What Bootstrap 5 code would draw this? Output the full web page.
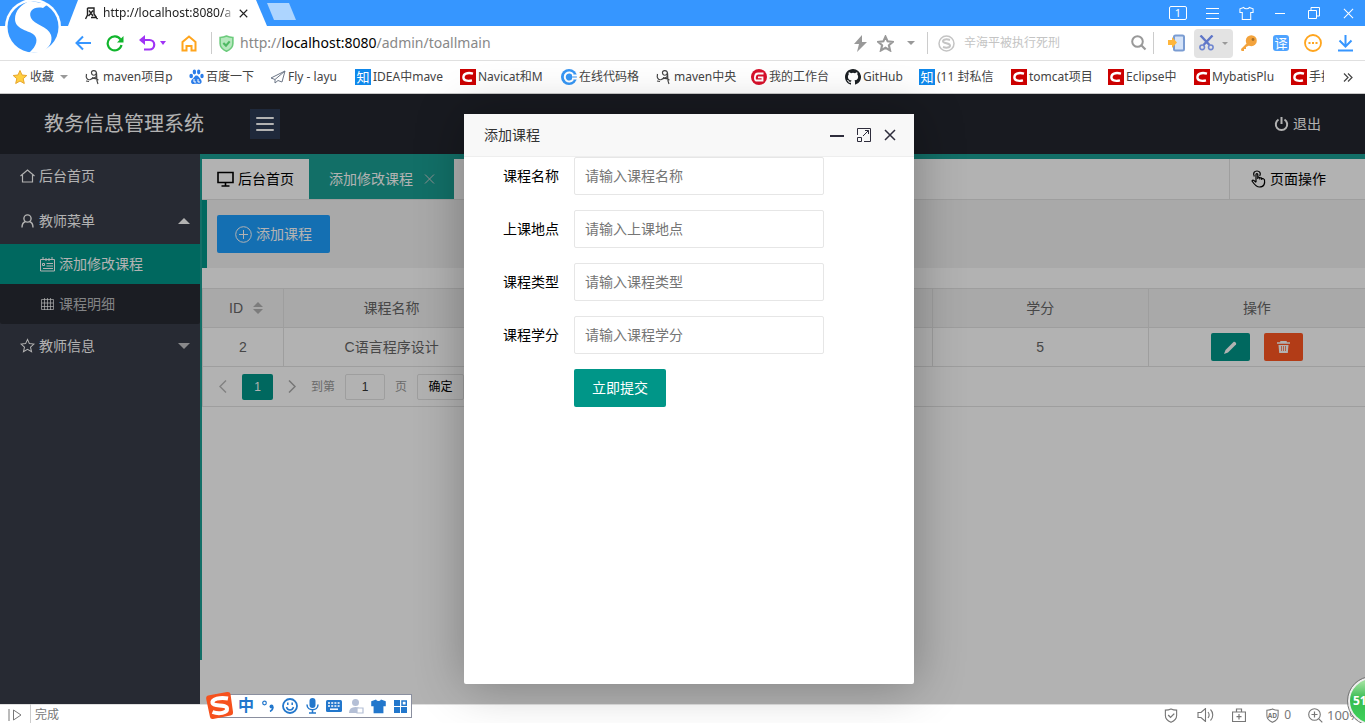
<!DOCTYPE html>
<html lang="zh-CN">
<head>
<meta charset="utf-8">
<meta name="viewport" content="width=device-width, initial-scale=1">
<title>教务信息管理系统</title>
<link rel="stylesheet" href="https://cdn.jsdelivr.net/npm/bootstrap@5.3.0/dist/css/bootstrap.min.css">
<script src="https://cdn.jsdelivr.net/npm/bootstrap@5.3.0/dist/js/bootstrap.bundle.min.js"></script>
<style>
  body { font: 14px/24px "Liberation Sans", "Noto Sans CJK SC", sans-serif; color: #000; background: #fff; }
  button { font-family: inherit; border: 0; background: none; padding: 0; color: inherit; }
  a { color: inherit; text-decoration: none; }
  svg { display: block; flex: none; fill: none; stroke: currentColor; stroke-width: 1.5; }
  .solid { fill: currentColor; stroke: none; }
  .thin { stroke-width: 1.1; }
  .chrome-font { font-family: "Noto Sans", "Noto Sans CJK SC", sans-serif; font-size: 12px; }
  .slot { display: flex; align-items: center; justify-content: center; flex: none; width: 32px; }
  .slot-s { width: 20px; }
  .slot-m { width: 28px; }
  .slot-l { width: 36px; }
  .slot-xl { width: 42px; }
  .caret-s { border: 4px solid transparent; border-top-color: #999; border-bottom: 0; }

  /* browser chrome */
  .titlebar { height: 26px; background: #3696ff; color: #fff; padding-left: 68px; }
  .titlebar .slot { width: 34px; }
  .page-tab { width: 199px; background: #fff; color: #222; padding-left: 17px; clip-path: polygon(10px 0, 188px 0, 100% 100%, 0 100%); }
  .page-tab .tab-url { width: 132px; margin-left: 5px; -webkit-mask-image: linear-gradient(90deg, #000 90%, transparent); mask-image: linear-gradient(90deg, #000 90%, transparent); }
  .new-tab { width: 29px; height: 17px; background: #add5ff; clip-path: polygon(0 0, 22px 0, 100% 100%, 7px 100%); margin-top: 3px; }
  .win-count { width: 18px; height: 14px; border: 1px solid #fff; border-radius: 2px; font-size: 11px; line-height: 12px; text-align: center; }
  .browser-logo { position: absolute; left: 4px; top: 0; z-index: 5; }
  .navrow { height: 35px; border-bottom: 1px solid #e0e0e0; padding: 0 4px 0 67px; color: #999; }
  .vline { width: 1px; height: 22px; background: #ccc; flex: none; }
  .gap-home { margin-left: 6px; }
  .address { font-size: 14px; color: #888; }
  .address b { font-weight: 400; color: #000; }
  .search-box { width: 161px; border: 0; padding: 0; outline: 0; }
  .search-box::placeholder { color: #c4c4c4; }
  .cut-btn { width: 39px; height: 29px; background: #e3e3e3; border-radius: 4px; gap: 8px; }
  .glyph-tile { width: 16px; height: 16px; font-size: 13px; line-height: 16px; color: #fff; text-align: center; background: #0f88eb; flex: none; }
  .glyph-tile.soft { background: #4ea3ff; border-radius: 3px; }
  .bookmarks { height: 33px; border-bottom: 1px solid #c8c8c8; padding: 0 12px; color: #444; display: grid;
    grid-template-columns: 73px 104px 81px 85px 105px 101px 95px 95px 94px 74px 92px 97px 86px 97px 33px 1fr; align-items: center; }
  .bookmarks a { display: flex; align-items: center; gap: 2px; white-space: nowrap; overflow: hidden; }

  /* application */
  .app { position: relative; }
  .topbar { height: 60px; background: #23262e; color: #fff; padding: 0 44px; }
  .brand { font-size: 20px; width: 206px; }
  .fold-btn { width: 30px; height: 30px; background: #2d3c55; }
  .side { width: 200px; background: #393d49; color: #fff; }
  .side a { display: flex; align-items: center; gap: 4px; height: 45px; padding: 0 10px 2px 20px; }
  .side .sub a { height: 40px; padding: 0 10px 0 40px; color: rgba(255,255,255,.7); }
  .side .sub { background: rgba(0,0,0,.3); border-radius: 2px; }
  .side .sub a.on { background: #009688; color: #fff; }
  .tri { border: 6px solid transparent; border-top-color: rgba(255,255,255,.7); border-bottom: 0; margin-left: auto; }
  .tri.up { border-top: 0; border-bottom: 6px solid #fff; }
  .work { margin-bottom: 44px; border-left: 2px solid #1aa094; border-top: 5px solid #1aa094; }
  .tabstrip { height: 41px; border-bottom: 1px solid #e2e2e2; }
  .tabstrip a { display: flex; align-items: center; padding: 0 15px; gap: 4px; }
  .tabstrip a.on { background: #1aa094; color: #fff; padding: 0 18px 0 20px; gap: 11px; }
  .tabstrip a.ops { border-left: 1px solid #e2e2e2; padding: 0 39px 0 21px; }
  .quote { border-left: 5px solid #009688; background: #f2f2f2; padding: 15px 10px; margin-bottom: 20px; }
  .lbtn { height: 38px; padding: 0 18px; border-radius: 2px; color: #fff; display: flex; align-items: center; gap: 4px; }
  .bg-blue { background: #1e9fff; }
  .bg-teal { background: #009688; }
  .bg-red { background: #ff5722; }
  .grid-table { table-layout: fixed; width: 100%; border-collapse: separate; border-spacing: 0; color: #666; border: solid #e2e2e2; border-width: 1px 0 0 1px; text-align: center; }
  .grid-table th, .grid-table td { height: 39px; padding: 0; font-weight: 400; border: solid #e2e2e2; border-width: 0 1px 1px 0; vertical-align: middle; }
  .grid-table th:last-child, .grid-table td:last-child { border-right: 0; }
  .grid-table th { background: #f2f2f2; }
  .grid-table .col-id { width: 81px; }
  .sorter { gap: 10px; padding-left: 6px; }
  .acts { gap: 14px; }
  .mini { width: 39px; height: 28px; border-radius: 2px; display: flex; align-items: center; justify-content: center; color: #fff; }
  .pager { height: 40px; border: solid #e2e2e2; border-width: 0 0 1px 1px; padding-left: 1px; font-size: 12px; color: #999; }
  .pager .slot { width: 38px; }
  .pager .cur, .pager input, .pager .go { height: 26px; border-radius: 2px; text-align: center; }
  .pager .cur { width: 31px; color: #fff; }
  .pager input { width: 40px; border: 1px solid #e2e2e2; color: #333; padding: 0; margin: 0 10px; }
  .pager .go { width: 47px; border: 1px solid #e2e2e2; color: #000; margin-left: 10px; }
  .shade { position: absolute; inset: 0; background: rgba(0,0,0,.3); }
  .dialog-box { position: absolute; left: 464px; top: 20px; bottom: 20px; width: 450px; background: #fff; border-radius: 2px; box-shadow: 1px 1px 50px rgba(0,0,0,.3); }
  .dialog-head { height: 43px; background: #f8f8f8; border-bottom: 1px solid #eee; color: #333; padding: 0 18px 0 20px; }
  .dialog-tools { gap: 13px; color: #2e2d3c; }
  .dialog-box .field { display: flex; align-items: center; margin-bottom: 15px; }
  .dialog-box label { width: 110px; padding-right: 15px; text-align: right; }
  .dialog-box input { width: 250px; height: 38px; border: 1px solid #e6e6e6; border-radius: 2px; padding: 0 10px; }
  .dialog-box input::placeholder { color: #757575; opacity: 1; }
  .submit { margin-left: 110px; }

  /* status bar and floating tools */
  .statusbar { height: 19px; border-top: 1px solid #e0e0e0; color: #777; padding: 2px 0 0 8px; }
  .statusbar .slot { width: 34px; }
  .ad-count { margin: 0 17px 0 9px; gap: 4px; }
  .zoom-rate { width: 38px; font-size: 13px; margin-left: 4px; white-space: nowrap; }
  .ime { position: absolute; left: 215px; bottom: 5px; height: 24px; width: 197px; background: #fff; border: 1px solid #8a8f9f; padding-left: 19px; color: #2277cc; z-index: 3; }
  .ime .slot { width: 22px; }
  .ime .zh { font-size: 16px; font-weight: 700; }
  .ime-logo { position: absolute; left: -11px; top: -4px; }
  .ball { position: absolute; right: -31px; bottom: -2px; width: 48px; height: 48px; border-radius: 50%; border: 2px solid #eee; outline: 1px solid #777; background: linear-gradient(#9be09b 0 8%, #38bb50 45%, #3fd35a); color: #fff; font-weight: 700; padding-left: 3px; z-index: 3; }
</style>
</head>
<body class="vh-100 overflow-hidden position-relative d-flex flex-column">

<svg width="0" height="0" class="position-absolute">
  <symbol id="csdn" viewBox="0 0 16 16"><path d="M0 0h16v16H0z" fill="#c00" stroke="none"/><path d="M13 4.600C7 3 3.400 5 3.400 8.200C3.400 11.500 7 12.600 12 11.400" stroke="#fff" stroke-width="2.400"/></symbol>
  <symbol id="maven" viewBox="0 0 16 16"><path d="M1.500 5c-1 4 1 6.500 4 5.500M7 8.500c4 1 5-1 4.500-4.500C11 .500 6 1 6.500 4s4 3 5 0c.500 3-.500 7 1.500 11M5.500 10.500c3-2.500 6-.500 8 .500M1 12l3 .500" stroke="#444" stroke-width="1.200"/></symbol>
  <symbol id="house" viewBox="0 0 16 16"><path d="M1 8l7-6 7 6M3 7v7h10V7"/></symbol>
  <symbol id="cross" viewBox="0 0 12 12"><path d="M1 1l10 10M11 1L1 11"/></symbol>
  <symbol id="star" viewBox="0 0 16 16"><path d="M8 1.500l2 4.500 4.800.500-3.600 3.200 1.100 4.800L8 12l-4.300 2.500 1.100-4.800L1.200 6.500 6 6z"/></symbol>
  <symbol id="shirt" viewBox="0 0 16 16"><path d="M5 1.500L1 3v4h2.500v7.500h9V7H15V3l-4-1.500c-1 2-5 2-6 0z"/></symbol>
  <symbol id="shield" viewBox="0 0 16 16"><path d="M8 1c2 1 4 1.300 6 1.300V8c0 4-3 6-6 7.300C5 14 2 12 2 8V2.300C4 2.300 6 2 8 1z"/></symbol>
</svg>

<svg class="browser-logo" width="58" height="56" viewBox="0 0 58 56">
  <circle cx="29" cy="27" r="28" fill="#fff" stroke="none"/>
  <circle cx="29" cy="27" r="25.500" fill="#3696ff" stroke="none"/>
  <path d="M26 1C17 4 11 11 11 19C11 29 23 30 29 34C35 38 33 46 25 53L38 52C45 48 49 42 47 35C44 26 30 25 27 18C24 11 30 6 39 8L44 4z" fill="#fff" stroke="none"/>
</svg>

<header class="chrome-font flex-shrink-0">
  <div class="titlebar d-flex">
    <div class="page-tab d-flex align-items-center">
      <svg width="13" height="13" viewBox="0 0 13 13"><path d="M2.500 1H9v6l3.500 5M2.500 1v7L.500 12M4 3.500l4 5.500M8 3.500L3.500 9M6 10.500h6" stroke="#222" stroke-width="1.400"/></svg>
      <span class="tab-url overflow-hidden text-nowrap">http://localhost:8080/a</span>
      <button aria-label="关闭标签" class="ms-1"><svg width="9" height="9"><use href="#cross"/></svg></button>
    </div>
    <button class="new-tab" aria-label="新标签"></button>
    <div class="d-flex ms-auto">
      <div class="slot"><span class="win-count">1</span></div>
      <button class="slot" aria-label="菜单"><svg width="13" height="12" viewBox="0 0 13 12"><path d="M0 1.500h13M0 6.500h13M0 11.500h13" stroke-width="1"/></svg></button>
      <button class="slot" aria-label="皮肤"><svg width="15" height="15" class="thin"><use href="#shirt"/></svg></button>
      <button class="slot" aria-label="最小化"><svg width="10" height="1"><path d="M0 .500h10" stroke-width="1"/></svg></button>
      <button class="slot" aria-label="还原"><svg width="12" height="12" viewBox="0 0 12 12"><path d="M.500 3.500h8v8h-8zM3 3V.500h8.500V9H9" stroke-width="1"/></svg></button>
      <button class="slot" aria-label="关闭"><svg width="11" height="11" class="thin"><use href="#cross"/></svg></button>
    </div>
  </div>

  <div class="navrow d-flex align-items-center">
    <button class="slot" aria-label="后退"><svg width="17" height="16" viewBox="0 0 17 16"><path d="M16 8H2M8 1.500L1.500 8 8 14.500" stroke="#3696ff" stroke-width="2"/></svg></button>
    <button class="slot" aria-label="刷新"><svg width="18" height="17" viewBox="0 0 18 17"><path d="M14.500 4.500A7 7 0 1 0 15.500 10" stroke="#10b52c" stroke-width="2.200"/><path d="M17.500 1v6.500H11z" fill="#10b52c" stroke="none"/></svg></button>
    <button class="slot slot-xl" aria-label="撤销"><svg width="17" height="16" viewBox="0 0 17 16"><path d="M2 5h8.500a4.700 4.700 0 0 1 0 9.500H5" stroke="#a033f5" stroke-width="2.200"/><path d="M6 0v10L0 5z" fill="#a033f5" stroke="none"/></svg><svg width="6" height="4" class="ms-1"><path d="M0 0h6L3 4z" fill="#a033f5" stroke="none"/></svg></button>
    <button class="slot" aria-label="主页"><svg width="16" height="17" viewBox="0 0 16 17"><path d="M1.500 15.500V7L8 1.500 14.500 7v8.500h-4V11h-5v4.500z" stroke="#ffa51e" stroke-width="2"/></svg></button>
    <span class="vline gap-home"></span>
    <span class="slot slot-m"><svg width="17" height="17" viewBox="0 0 16 16"><use href="#shield" style="fill:#b5e8bd;stroke:#6ccb7c"/><path d="M5 7.500l2.500 2.500L11 6" stroke="#4fb963" stroke-width="2"/></svg></span>
    <div class="address flex-grow-1">http://<b>localhost:8080</b>/admin/toallmain</div>
    <button class="slot slot-m" aria-label="加速"><svg width="14" height="17" viewBox="0 0 14 17" class="solid"><path d="M8 0L0 9h5l-2 8L13 7H8z"/></svg></button>
    <button class="slot slot-s" aria-label="收藏本页"><svg width="17" height="17"><use href="#star" style="stroke-width:2"/></svg></button>
    <button class="slot" aria-label="更多收藏"><span class="caret-s"></span></button>
    <span class="vline"></span>
    <span class="slot slot-l"><svg width="17" height="17" viewBox="0 0 17 17"><circle cx="8.500" cy="8.500" r="7.500" stroke="#c4c4c4"/><path d="M12 5C9 4 5 4 5 6.300S12 8 12 10.500 8 13 5 12" stroke="#c4c4c4" stroke-width="2"/></svg></span>
    <input class="search-box" type="text" aria-label="搜索" placeholder="辛海平被执行死刑">
    <button class="slot slot-m" aria-label="搜索"><svg width="16" height="16" viewBox="0 0 16 16"><circle cx="6.500" cy="6.500" r="5.300" stroke-width="2"/><path d="M10.500 10.500l4 4" stroke-width="2.200"/></svg></button>
    <span class="vline"></span>
    <button class="slot slot-l ms-1" aria-label="手机"><svg width="17" height="18" viewBox="0 0 17 18"><rect x="6" y="1.500" width="10" height="15" rx="1.500" fill="#d5e3f8" stroke="#7a9cd2" stroke-width="2"/><path d="M0 6h4V3l5 5.500L4 14v-3H0z" fill="#ffb63c" stroke="none"/></svg></button>
    <button class="slot cut-btn" aria-label="截图"><svg width="15" height="16" viewBox="0 0 15 16"><path d="M1.500 .500L10.500 10M13.500 .500L4.500 10" stroke="#5f76c8" stroke-width="2.400"/><circle cx="3.200" cy="12.300" r="2.300" stroke="#6f86d0" stroke-width="1.600"/><circle cx="11.800" cy="12.300" r="2.300" stroke="#6f86d0" stroke-width="1.600"/></svg><svg width="6" height="3"><path d="M0 0h6L3 3z" fill="#999" stroke="none"/></svg></button>
    <button class="slot" aria-label="密码"><svg width="16" height="16" viewBox="0 0 16 16"><path d="M7 7l-7 7 .500 2H3v-2h2v-2l4-2z" fill="#f3a33c" stroke="none"/><circle cx="10.300" cy="5.700" r="5.500" fill="#f3a33c" stroke="none"/><circle cx="12" cy="4.500" r="1.400" fill="#a8702a" stroke="none"/></svg></button>
    <button class="slot" aria-label="翻译"><span class="glyph-tile soft">译</span></button>
    <button class="slot" aria-label="更多"><svg width="18" height="18" viewBox="0 0 18 18"><circle cx="9" cy="9" r="8" stroke="#ffa51e" stroke-width="1.800"/><path d="M4.500 8h2v2h-2zM8 8h2v2H8zM11.500 8h2v2h-2z" fill="#ffa51e" stroke="none"/></svg></button>
    <button class="slot" aria-label="下载"><svg width="15" height="17" viewBox="0 0 15 17"><path d="M7.500 0v11M1.500 5.500l6 6 6-6M0 15.500h15" stroke="#3696ff" stroke-width="2"/></svg></button>
  </div>

  <nav class="bookmarks">
    <a href="#"><svg width="16" height="16"><use href="#star" style="fill:#ffcf40;stroke:#e8a52b;stroke-width:1"/></svg>收藏<span class="caret-s ms-1"></span></a>
    <a href="#"><svg width="16" height="16"><use href="#maven"/></svg>maven项目p</a>
    <a href="#"><svg width="15" height="16" viewBox="0 0 15 16" style="fill:#2b7de9;stroke:none"><ellipse cx="2.200" cy="7" rx="1.800" ry="2.300"/><ellipse cx="5.400" cy="3" rx="1.700" ry="2.400"/><ellipse cx="9.700" cy="3" rx="1.700" ry="2.400"/><ellipse cx="13" cy="7" rx="1.700" ry="2.300"/><path d="M7.500 6.500c2 0 2.500 2 4 3.500s2 5-1.500 5c-2 0-3-.500-5 0-3 .500-4-3-1.500-5s2-3.500 4-3.500z"/><path d="M5 10v3h2M9 10v3h2" style="fill:none;stroke:#fff;stroke-width:1"/></svg>百度一下</a>
    <a href="#"><svg width="16" height="16" viewBox="0 0 16 16"><path d="M15 2L1 9l4 1.500L15 2l-3 11-4-1.500M5 10.500V14l3-2.500" stroke="#6c7686" stroke-width="1"/></svg>Fly - layu</a>
    <a href="#"><span class="glyph-tile">知</span>IDEA中mave</a>
    <a href="#"><svg width="16" height="16"><use href="#csdn"/></svg>Navicat和M</a>
    <a href="#"><svg width="16" height="16" viewBox="0 0 16 16"><circle cx="8" cy="8" r="8" fill="#3696f4" stroke="none"/><path d="M12 5.500A4.500 4.500 0 1 0 12 10.500M11 6.500h5M11 9.500h5" stroke="#fff" stroke-width="2"/></svg>在线代码格</a>
    <a href="#"><svg width="16" height="16"><use href="#maven"/></svg>maven中央</a>
    <a href="#"><svg width="16" height="16" viewBox="0 0 16 16"><circle cx="8" cy="8" r="8" fill="#d8112b" stroke="none"/><path d="M12.500 4.500H7C3 4.500 3.500 11.500 5 11.500h6.500V8.300H7" stroke="#fff" stroke-width="1.800"/></svg>我的工作台</a>
    <a href="#"><svg width="16" height="16" viewBox="0 0 16 16" style="fill:#1b1f23;stroke:none"><path d="M8 0C3.580 0 0 3.580 0 8c0 3.540 2.290 6.530 5.470 7.590.4.070.55-.17.55-.38 0-.19-.01-.82-.01-1.490-2.010.37-2.530-.49-2.690-.94-.09-.23-.48-.94-.82-1.130-.28-.15-.68-.52-.01-.53.63-.01 1.080.58 1.230.82.72 1.210 1.870.87 2.330.66.07-.52.28-.87.51-1.070-1.780-.2-3.640-.89-3.640-3.950 0-.87.31-1.590.82-2.150-.08-.2-.36-1.020.08-2.120 0 0 .67-.21 2.200.82a7.600 7.600 0 0 1 4 0c1.530-1.040 2.200-.82 2.200-.82.44 1.100.16 1.920.08 2.120.51.560.82 1.270.82 2.150 0 3.070-1.870 3.750-3.650 3.950.29.25.54.73.54 1.480 0 1.070-.01 1.930-.01 2.200 0 .21.15.46.55.38A8 8 0 0 0 8 0z"/></svg>GitHub</a>
    <a href="#"><span class="glyph-tile">知</span>(11 封私信</a>
    <a href="#"><svg width="16" height="16"><use href="#csdn"/></svg>tomcat项目</a>
    <a href="#"><svg width="16" height="16"><use href="#csdn"/></svg>Eclipse中</a>
    <a href="#"><svg width="16" height="16"><use href="#csdn"/></svg>MybatisPlu</a>
    <a href="#"><svg width="16" height="16"><use href="#csdn"/></svg>手把</a>
    <button class="ms-auto" aria-label="更多书签"><svg width="10" height="9" viewBox="0 0 10 9"><path d="M1 .500l4 4-4 4M5 .500l4 4-4 4" stroke-width="1.200"/></svg></button>
  </nav>
</header>

<div class="app flex-grow-1 d-flex flex-column">
  <div class="topbar d-flex align-items-center flex-shrink-0">
    <div class="brand">教务信息管理系统</div>
    <button class="fold-btn d-flex align-items-center justify-content-center" aria-label="折叠菜单"><svg width="18" height="14" viewBox="0 0 18 14"><path d="M1 1h16M1 7h16M1 13h16" stroke-width="2" stroke-linecap="round"/></svg></button>
    <a href="#" class="ms-auto d-flex align-items-center gap-1"><svg width="15" height="15" viewBox="0 0 15 15"><path d="M4.500 2.500a5.700 5.700 0 1 0 6 0M7.500 0v7" stroke-width="2"/></svg>退出</a>
  </div>
  <div class="d-flex flex-grow-1">
    <nav class="side flex-shrink-0">
      <a href="#"><svg width="15" height="14" viewBox="0 0 15 14"><path d="M.500 7l7-6 7 6M2.500 6v7h10V6" stroke-width="1.200"/></svg>后台首页</a>
      <a href="#"><svg width="15" height="14" viewBox="0 0 15 14"><circle cx="7.500" cy="4.500" r="3.600" stroke-width="1.400"/><path d="M2 13.500c0-3.500 2-5.500 3.500-6M13 13.500c0-3.500-2-5.500-3.500-6" stroke-width="1.400"/></svg>教师菜单<span class="tri up"></span></a>
      <div class="sub">
        <a href="#" class="on"><svg width="15" height="15" viewBox="0 0 15 15"><path d="M.500 2.500h14v11.500H.500zM3 0v3M6 1v3M9 1v3M12 0v3M2.500 6.500h2v2h-2zM6.500 6.500H13M6.500 9H13M3 11.500h10" stroke-width="1"/></svg>添加修改课程</a>
        <a href="#"><svg width="15" height="13" viewBox="0 0 15 13"><path d="M1.500 1.500h12v10h-12zM1.500 5h12M1.500 8.500h12M4.500 0v12M7.500 0v12M10.500 0v12" stroke-width="1"/></svg>课程明细</a>
      </div>
      <a href="#"><svg width="15" height="15" class="thin"><use href="#star"/></svg>教师信息<span class="tri"></span></a>
    </nav>
    <main class="work flex-grow-1">
      <div class="tabstrip d-flex">
        <a href="#"><svg width="17" height="16" viewBox="0 0 17 16"><path d="M1 1.500h15v10H1zM8.500 11.500V15M4.500 15h8" stroke-width="1.600"/></svg>后台首页</a>
        <a href="#" class="on">添加修改课程<svg width="12" height="12" viewBox="0 0 12 12"><path d="M1 1.500l9 9M10 1.500l-9 9" stroke="#ccc" stroke-width="1"/></svg></a>
        <a href="#" class="ops ms-auto"><svg width="15" height="18" viewBox="0 0 15 18"><path d="M5 12V4.500c0-1.300 1.800-1.300 1.800 0V9M6.800 7.500c.800-.600 2-.300 2 .800V9.500M8.800 8c.900-.500 2-.200 2 .900v1M10.800 8.700c1-.500 2.300 0 2.700 1.300.500 3 0 7-5 7-3.500 0-5-2.500-7.500-6 .500-1.500 2-1 4 1.500M3.300 6.500C1.500 3 3.500 1 6 1s4.300 2 2.700 5" stroke-width="1.200"/></svg>页面操作</a>
      </div>
      <div class="quote"><button class="lbtn bg-blue"><svg width="17" height="17" viewBox="0 0 17 17"><circle cx="8.500" cy="8.500" r="7.800" stroke-width="1"/><path d="M8.500 4v9M4 8.500h9" stroke-width="1"/></svg>添加课程</button></div>
      <table class="grid-table">
        <thead><tr>
          <th class="col-id"><span class="sorter d-flex align-items-center justify-content-center">ID<svg width="10" height="12" viewBox="0 0 10 12"><path d="M0 5l5-5 5 5zM0 7h10l-5 5z" fill="#b2b2b2" stroke="none"/></svg></span></th>
          <th>课程名称</th><th></th><th></th><th>学分</th><th>操作</th>
        </tr></thead>
        <tbody><tr>
          <td>2</td><td>C语言程序设计</td><td></td><td></td><td>5</td>
          <td><div class="acts d-flex justify-content-center">
            <button class="mini bg-teal" aria-label="编辑"><svg width="13" height="13" viewBox="0 0 13 13" class="solid"><path d="M0 13l1.500-4L9.500 1c1-1 3.500 1 2.500 2.500L4 11.500z"/></svg></button>
            <button class="mini bg-red" aria-label="删除"><svg width="13" height="12" viewBox="0 0 13 12"><path d="M0 2h13M4 1.500V.500h5v1" stroke-width="1.500"/><path d="M1.500 4h10l-.700 8H2.200z" fill="currentColor" stroke="none"/><path d="M4.500 5v5M6.500 5v5M8.500 5v5" stroke="#ff5722" stroke-width=".700"/></svg></button>
          </div></td>
        </tr></tbody>
      </table>
      <div class="pager d-flex align-items-center">
        <button class="slot" aria-label="上一页"><svg width="8" height="13" viewBox="0 0 8 13"><path d="M7 .500l-6 6 6 6" stroke="#bbb"/></svg></button>
        <button class="cur bg-teal">1</button>
        <button class="slot" aria-label="下一页"><svg width="8" height="13" viewBox="0 0 8 13"><path d="M1 .500l6 6-6 6" stroke="#aaa"/></svg></button>
        <label for="pg">到第</label>
        <input id="pg" type="text" value="1">
        <span>页</span>
        <button class="go">确定</button>
      </div>
    </main>
  </div>

  <div class="shade"></div>
  <section class="dialog-box" role="dialog" aria-label="添加课程">
    <div class="dialog-head d-flex align-items-center">
      <span class="me-auto">添加课程</span>
      <div class="dialog-tools d-flex align-items-center">
        <button aria-label="最小化"><svg width="14" height="14" viewBox="0 0 14 14"><path d="M0 8h14" stroke-width="2"/></svg></button>
        <button aria-label="最大化"><svg width="14" height="14" viewBox="0 0 14 14"><path d="M.500 7V.500h13v13H7M.500 9.500h4v4h-4zM6 8l5.500-5.500M8 2.500h3.500V6" stroke-width="1"/></svg></button>
        <button aria-label="关闭"><svg width="12" height="12"><use href="#cross"/></svg></button>
      </div>
    </div>
    <form>
      <div class="field"><label for="f1">课程名称</label><input id="f1" type="text" placeholder="请输入课程名称"></div>
      <div class="field"><label for="f2">上课地点</label><input id="f2" type="text" placeholder="请输入上课地点"></div>
      <div class="field"><label for="f3">课程类型</label><input id="f3" type="text" placeholder="请输入课程类型"></div>
      <div class="field"><label for="f4">课程学分</label><input id="f4" type="text" placeholder="请输入课程学分"></div>
      <button type="button" class="lbtn bg-teal submit">立即提交</button>
    </form>
  </section>
</div>

<footer class="statusbar chrome-font d-flex align-items-center flex-shrink-0">
  <svg width="14" height="12" viewBox="0 0 14 12"><path d="M1 0v12M5.500 1v10L13 6z" stroke-width="1"/></svg>
  <span class="vline ms-2 me-1"></span>
  <span>完成</span>
  <div class="d-flex align-items-center ms-auto">
    <span class="slot"><svg width="16" height="15" viewBox="0 0 16 16"><use href="#shield" style="stroke-width:1.200"/><path d="M5 7.500l2.500 2.500L11.500 6"/></svg></span>
    <span class="slot"><svg width="17" height="14" viewBox="0 0 17 14"><path d="M1 4.500h3l4.500-4v13l-4.500-4H1zM11 4c1.500 2 1.500 4 0 6M13.500 1.500c3 3 3 8 0 11" stroke-width="1.100"/></svg></span>
    <span class="slot"><svg width="14" height="14" viewBox="0 0 14 14"><path d="M.500 4h13v9.500H.500zM4.500 4V1h5v3M7 6v5.500M4.500 8.700h5" stroke-width="1.200"/></svg></span>
    <span class="ad-count d-flex align-items-center"><svg width="15" height="15" viewBox="0 0 16 16"><use href="#shield" style="stroke-width:1.100"/><text x="8" y="11" text-anchor="middle" font-size="7" font-weight="700" class="solid">AD</text></svg>0</span>
    <svg width="15" height="15" viewBox="0 0 15 15"><circle cx="6.500" cy="6.500" r="5.800" stroke-width="1.100"/><path d="M10.800 10.800l3.500 3.500M6.500 3.500v6M3.500 6.500h6" stroke-width="1.200"/></svg>
    <span class="zoom-rate">100%</span>
  </div>
</footer>

<div class="ime d-flex align-items-stretch">
  <svg class="ime-logo" width="30" height="30" viewBox="0 0 30 30"><path d="M3 4.500L22 1q3-.500 3.500 2L28 21q.300 3-2.500 3.500L8 28q-2.500.500-3-2L1.200 8q-.400-3 1.800-3.500z" fill="#f6511d" stroke="none"/><path d="M23 7.500C15 6 6.500 8 7.500 12s14 1 14.500 5.500S14 23.500 7.500 21" stroke="#fff" stroke-width="4"/></svg>
  <span class="slot zh">中</span>
  <span class="slot"><svg width="12" height="12" viewBox="0 0 12 12"><circle cx="2.500" cy="3" r="1.800" stroke-width="1.200"/><circle cx="9.500" cy="6.500" r="2" class="solid"/><path d="M11 7q0 3-3 4.500" stroke-width="1.500"/></svg></span>
  <span class="slot"><svg width="16" height="16" viewBox="0 0 16 16"><circle cx="8" cy="8" r="7" stroke-width="1.800"/><path d="M4.500 9c1 4 6 4 7 0M5.800 4.500v2.500M10.200 4.500v2.500"/></svg></span>
  <span class="slot"><svg width="13" height="16" viewBox="0 0 13 16"><rect x="3.500" y="0" width="6" height="10" rx="3" class="solid"/><path d="M1 6.500c0 7 11 7 11 0M6.500 12v3.500M3 15h7"/></svg></span>
  <span class="slot"><svg width="16" height="12" viewBox="0 0 16 12"><rect width="16" height="12" rx="1.500" class="solid"/><path d="M2 3h12M2 6h12" stroke="#fff" stroke-dasharray="2 1.200"/><path d="M4 9.200h8" stroke="#fff"/></svg></span>
  <span class="slot"><svg width="15" height="15" viewBox="0 0 15 15" style="color:#b4bfd6"><circle cx="6.500" cy="3.500" r="3.500" class="solid"/><path d="M0 14q0-6 6.500-6T12 14z" class="solid"/><path d="M8 9h6v5H8z" fill="#fff" stroke-width="1.200"/></svg></span>
  <span class="slot"><svg width="15" height="15" style="fill:currentColor"><use href="#shirt"/></svg></span>
  <span class="slot"><svg width="13" height="13" viewBox="0 0 13 13"><path d="M0 0h6v6H0zM0 7h6v6H0zM7 7h6v6H7z" class="solid"/><path d="M8 1h4.300v4.300H8z"/></svg></span>
</div>
<div class="ball chrome-font d-flex align-items-center">51</div>

</body>
</html>
